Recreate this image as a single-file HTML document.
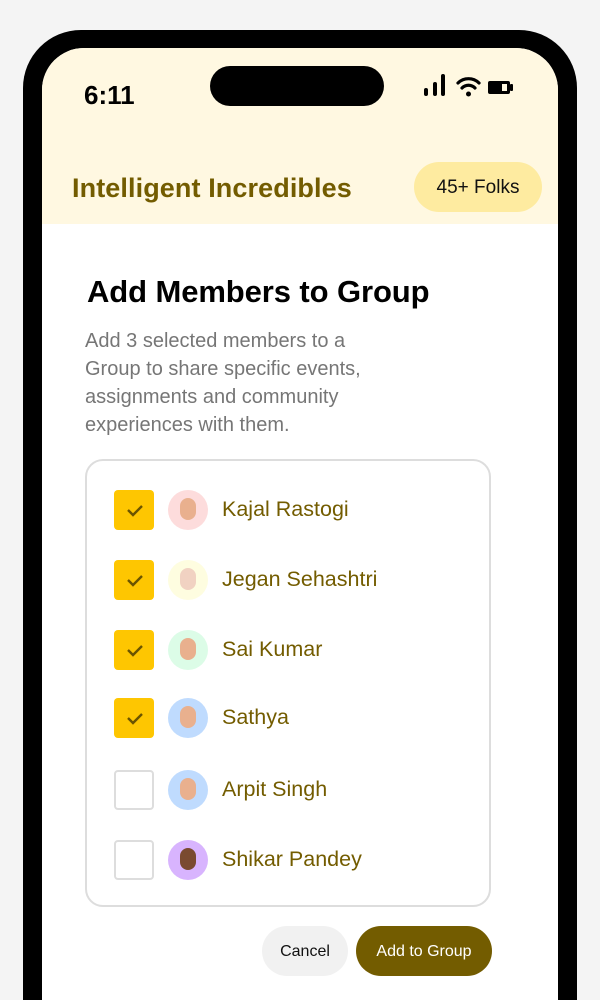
<!DOCTYPE html>
<html><head><meta charset="utf-8"><style>
*{margin:0;padding:0;box-sizing:border-box}
html,body{width:600px;height:1000px;overflow:hidden}
body{background:#f4f4f4;font-family:"Liberation Sans",sans-serif;position:relative}
.frame{position:absolute;left:23px;top:30px;width:554px;height:970px;background:#000;border-radius:58px 58px 0 0}
.screen{position:absolute;left:42px;top:48px;width:516px;height:952px;background:#fff;border-radius:42px 42px 0 0;overflow:hidden}
.hdr{position:absolute;left:0;top:0;width:516px;height:176px;background:#fff8e1}
.island{position:absolute;left:168px;top:18px;width:174px;height:40px;background:#000;border-radius:20px}
.time{position:absolute;left:42px;top:32px;font-size:26px;font-weight:bold;color:#000}
.title{position:absolute;left:30px;top:125px;font-size:27px;font-weight:bold;color:#735c00;letter-spacing:0.1px}
.pill{position:absolute;left:372px;top:114px;width:128px;height:50px;border-radius:25px;background:#feeba0;font-size:19px;line-height:52px;text-align:center;color:#111}
h1{position:absolute;left:45px;top:226px;font-size:31px;color:#000;letter-spacing:-0.1px}
.desc{position:absolute;left:43px;top:279px;width:318px;font-size:20px;line-height:28px;color:#767676}
.card{position:absolute;left:43px;top:411px;width:406px;height:448px;border:2px solid #ddd;border-radius:18px}
.row{position:absolute;left:72px;height:40px;width:380px}
.cb{position:absolute;left:0;top:0;width:40px;height:40px;border-radius:4px;background:#fec601}
.cb.off{background:#fff;border:2px solid #ddd}
.av{position:absolute;left:54px;top:0;width:40px;height:40px;border-radius:50%}
.av i{position:absolute;left:12px;top:8px;width:16px;height:22px;border-radius:8px;background:#e9b08e}
.nm{position:absolute;left:108px;top:7px;font-size:21.5px;color:#735c00}
.btn{position:absolute;top:878px;height:50px;border-radius:25px;font-size:16px;line-height:52px;text-align:center}
</style></head><body>
<div class="frame"></div>
<div class="screen">
<div class="hdr"></div>
<div class="island"></div>
<div class="time">6:11</div>
<svg style="position:absolute;left:382px;top:26px" width="106" height="24" viewBox="0 0 106 24">
<rect x="0" y="14" width="4" height="8" rx="2"/><rect x="9" y="8" width="4" height="14" rx="2"/><rect x="17" y="0" width="4" height="22" rx="2"/>
<path d="M34 9a15 15 0 0 1 21 0" stroke="#000" stroke-width="3.2" fill="none" stroke-linecap="round"/>
<path d="M38 14a9 9 0 0 1 13 0" stroke="#000" stroke-width="3.2" fill="none" stroke-linecap="round"/>
<circle cx="44.5" cy="20" r="2.5"/>
<rect x="64" y="7" width="22" height="13" rx="2"/><rect x="86" y="10" width="3" height="7" rx="1"/><rect x="78" y="10" width="5" height="7" fill="#fff8e1"/>
</svg>
<div class="title">Intelligent Incredibles</div>
<div class="pill">45+ Folks</div>
<h1>Add Members to Group</h1>
<div class="desc">Add 3 selected members to a Group to share specific events, assignments and community experiences with them.</div>
<div class="card"></div>
<div class="row" style="top:442px"><div class="cb"><svg width="40" height="40"><path d="M14 20l5 5 9-9" stroke="#6b5400" stroke-width="2.4" fill="none"/></svg></div><div class="av" style="background:#fddcdc"><i></i></div><div class="nm">Kajal Rastogi</div></div>
<div class="row" style="top:512px"><div class="cb"><svg width="40" height="40"><path d="M14 20l5 5 9-9" stroke="#6b5400" stroke-width="2.4" fill="none"/></svg></div><div class="av" style="background:#fefde0"><i style="background:#f1d2c2"></i></div><div class="nm">Jegan Sehashtri</div></div>
<div class="row" style="top:582px"><div class="cb"><svg width="40" height="40"><path d="M14 20l5 5 9-9" stroke="#6b5400" stroke-width="2.4" fill="none"/></svg></div><div class="av" style="background:#dcfce7"><i></i></div><div class="nm">Sai Kumar</div></div>
<div class="row" style="top:650px"><div class="cb"><svg width="40" height="40"><path d="M14 20l5 5 9-9" stroke="#6b5400" stroke-width="2.4" fill="none"/></svg></div><div class="av" style="background:#bfdbfe"><i></i></div><div class="nm">Sathya</div></div>
<div class="row" style="top:722px"><div class="cb off"></div><div class="av" style="background:#bfdbfe"><i></i></div><div class="nm">Arpit Singh</div></div>
<div class="row" style="top:792px"><div class="cb off"></div><div class="av" style="background:#d8b4fe"><i style="background:#7a4a30"></i></div><div class="nm">Shikar Pandey</div></div>
<div class="btn" style="left:220px;width:86px;background:#f1f1f1;color:#111">Cancel</div>
<div class="btn" style="left:314px;width:136px;background:#735c00;color:#fff">Add to Group</div>
</div>
</body></html>
